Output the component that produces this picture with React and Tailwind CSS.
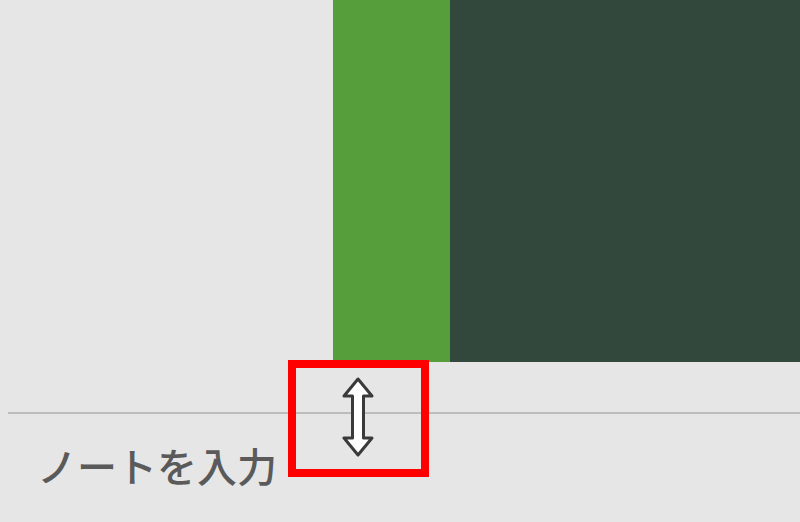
import React from 'react';

const ResizeCursor = () => (
  <svg width="34" height="80" viewBox="0 0 34 80" className="block">
    <path
      d="M17 2 L31 19 L22.5 19 L22.5 61 L31 61 L17 78 L3 61 L11.5 61 L11.5 19 L3 19 Z"
      fill="#ffffff"
      stroke="#3a3a3a"
      strokeWidth="3"
      strokeLinejoin="round"
    />
  </svg>
);

export default function App() {
  return (
    <div
      className="relative w-[800px] h-[522px] overflow-hidden bg-[#e6e6e6]"
      style={{ fontFamily: '"Noto Sans CJK JP", "Noto Sans", sans-serif' }}
    >
      {/* スライド領域 */}
      <div className="flex h-[362px]">
        <div className="w-[333px]" />
        <div className="w-[117px] bg-[#559e3b]" />
        <div className="flex-1 bg-[#33483c]" />
      </div>

      {/* 区切り線 */}
      <div className="mt-[50px] ml-[8px] h-[2px] bg-[#bdbdbd]" />

      {/* ノート */}
      <div className="pl-[37px] pt-[31px] text-[40px] leading-none font-medium text-[#5a5a5a]">
        ノートを入力
      </div>

      {/* カーソル */}
      <div className="absolute left-[341px] top-[377px]">
        <ResizeCursor />
      </div>

      {/* 強調枠 */}
      <div className="absolute left-[288px] top-[360px] w-[141px] h-[117px] border-[8px] border-[#ff0000]" />
    </div>
  );
}
